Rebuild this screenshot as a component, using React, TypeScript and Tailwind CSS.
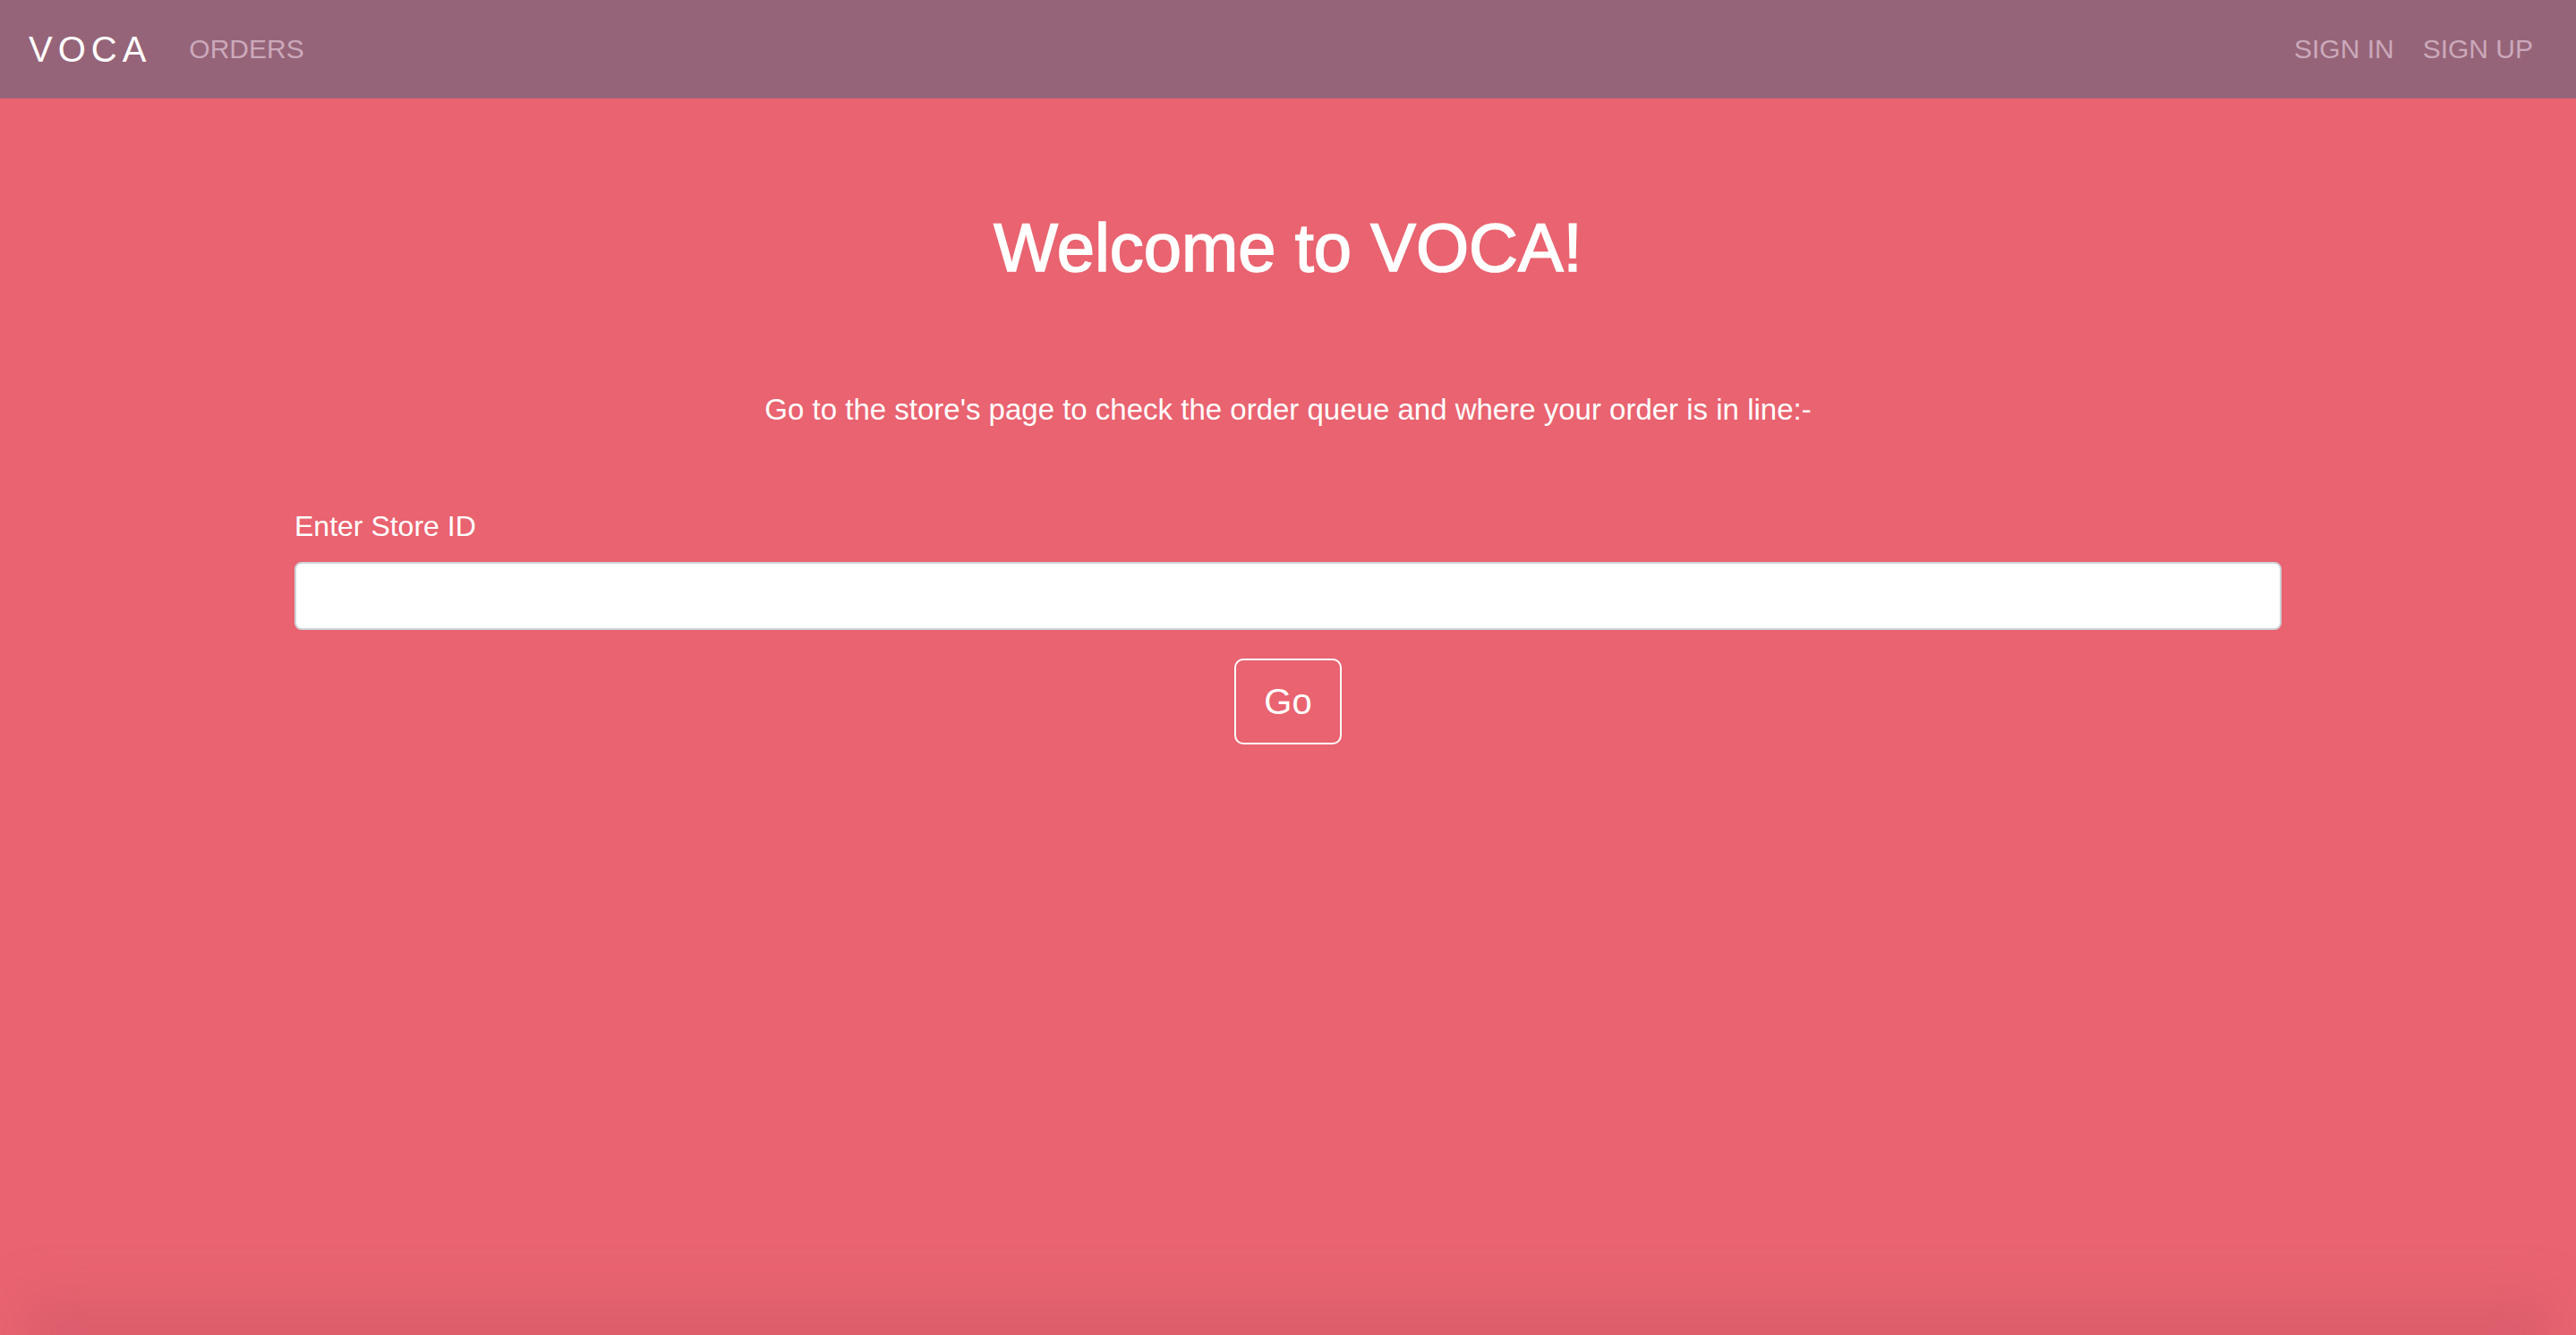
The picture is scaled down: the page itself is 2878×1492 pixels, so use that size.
import { useState } from "react";

const font = { fontFamily: '"Liberation Sans", Arial, sans-serif' };

function NavBar() {
  return (
    <nav className="flex h-[110px] shrink-0 items-center bg-[#966478] px-[32px]">
      <a className="mr-[26px] text-[40px] leading-none tracking-[0.15em] text-white">
        VOCA
      </a>
      <a className="px-[16px] text-[30px] leading-none text-[#cba9bb]">ORDERS</a>
      <div className="ml-auto flex">
        <a className="px-[16px] text-[30px] leading-none text-[#cba9bb]">SIGN IN</a>
        <a className="px-[16px] text-[30px] leading-none text-[#cba9bb]">SIGN UP</a>
      </div>
    </nav>
  );
}

export default function App() {
  const [storeId, setStoreId] = useState("");

  return (
    <div
      className="flex h-[1492px] flex-col overflow-hidden bg-[#e96370]"
      style={font}
    >
      <NavBar />
      <main className="flex-1">
        <div className="mx-auto w-[2280px] px-[30px] text-center text-white">
          <h1 className="mt-[121px] text-[76px] leading-[1.2] [-webkit-text-stroke:1.6px_white]">
            Welcome to VOCA!
          </h1>
          <p className="mt-[112px] text-[33px] leading-[48px]">
            Go to the store's page to check the order queue and where your order
            is in line:-
          </p>
          <div className="mt-[82px] text-left">
            <label className="block text-[32px] leading-[48px]">
              Enter Store ID
            </label>
            <input
              value={storeId}
              onChange={(e) => setStoreId(e.target.value)}
              className="mt-[16px] block h-[76px] w-full rounded-[8px] border-2 border-[#ced4da] bg-white px-[24px] text-[32px] text-[#495057] outline-none"
            />
          </div>
          <button className="mt-[32px] h-[96px] w-[120px] rounded-[10px] border-2 border-white text-[40px] leading-none text-white">
            Go
          </button>
        </div>
      </main>
      <div className="-mb-[20px] mx-[30px] h-[80px] shrink-0 bg-linear-to-b from-transparent to-[#d35a6a] blur-xl" />
    </div>
  );
}
